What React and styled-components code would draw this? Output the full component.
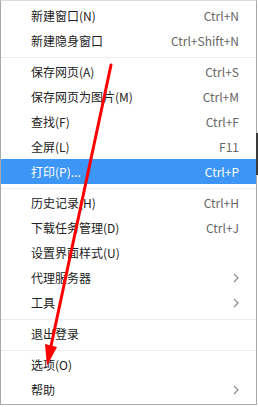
import React from 'react'
import styled, { createGlobalStyle, css } from 'styled-components'

const Global = createGlobalStyle`
  html, body {
    margin: 0;
    padding: 0;
    background: #fff;
  }
  body {
    font-family: "Noto Sans CJK SC", "Noto Sans", sans-serif;
  }
`

const Page = styled.div`
  position: relative;
  width: 258px;
  height: 407px;
  overflow: hidden;
`

const Menu = styled.ul`
  list-style: none;
  margin: 0;
  padding: 2px 0;
  width: 255px;
  border: 1px solid #a8a8a8;
  border-top-color: #dcdcdc;
  background: #fff;
`

const Row = styled.li`
  display: flex;
  align-items: center;
  justify-content: space-between;
  height: 25px;
  padding: 0 17px 0 30px;
  font-size: 12px;
  color: #222;
  ${props => props.active && css`
    background: #3d96f5;
    color: #fff;
  `}
`

const Shortcut = styled.span`
  color: ${props => props.active ? '#fff' : '#666'};
  font-size: 12px;
`

const Separator = styled.li`
  height: 1px;
  margin: 4px 0 1px;
  background: #ececec;
`

const EdgeMark = styled.div`
  position: absolute;
  right: 0;
  top: 133px;
  width: 2px;
  height: 42px;
  background: #3a3a3a;
`

const Overlay = styled.svg`
  position: absolute;
  left: 0;
  top: 0;
  pointer-events: none;
`

const Chevron = () => (
  <svg width="6" height="10" viewBox="0 0 6 10">
    <polyline points="1,1 5,5 1,9" fill="none" stroke="#8a8a8a" strokeWidth="1.2" />
  </svg>
)

const groups = [
  [
    { label: '新建窗口(N)', key: 'Ctrl+N' },
    { label: '新建隐身窗口', key: 'Ctrl+Shift+N' },
  ],
  [
    { label: '保存网页(A)', key: 'Ctrl+S' },
    { label: '保存网页为图片(M)', key: 'Ctrl+M' },
    { label: '查找(F)', key: 'Ctrl+F' },
    { label: '全屏(L)', key: 'F11' },
    { label: '打印(P)...', key: 'Ctrl+P', active: true },
  ],
  [
    { label: '历史记录(H)', key: 'Ctrl+H' },
    { label: '下载任务管理(D)', key: 'Ctrl+J' },
    { label: '设置界面样式(U)' },
    { label: '代理服务器', sub: true },
    { label: '工具', sub: true },
  ],
  [{ label: '退出登录' }],
  [
    { label: '选项(O)' },
    { label: '帮助', sub: true },
  ],
]

export default function App() {
  return (
    <Page>
      <Global />
      <Menu>
        {groups.map((group, gi) => (
          <React.Fragment key={gi}>
            {gi > 0 && <Separator />}
            {group.map(item => (
              <Row key={item.label} active={item.active}>
                <span>{item.label}</span>
                {item.key && <Shortcut active={item.active}>{item.key}</Shortcut>}
                {item.sub && <Chevron />}
              </Row>
            ))}
          </React.Fragment>
        ))}
      </Menu>
      <EdgeMark />
      <Overlay width="258" height="407">
        <line x1="111" y1="65" x2="51" y2="346" stroke="#ff0000" strokeWidth="3" strokeLinecap="round" />
        <polygon points="47,366 57,347 45,344" fill="#ff0000" />
      </Overlay>
    </Page>
  )
}
